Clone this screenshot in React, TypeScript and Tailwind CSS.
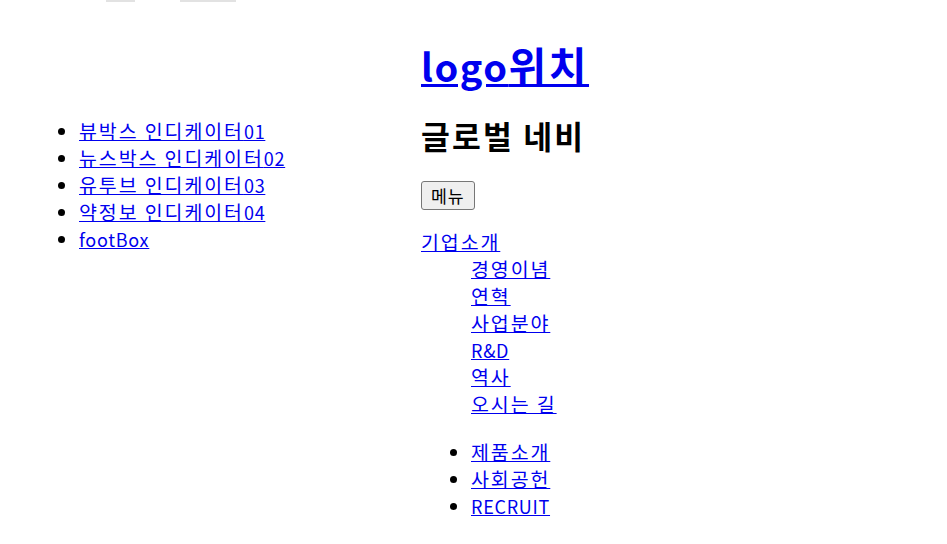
import React from 'react';

const leftItems = ['뷰박스 인디케이터01', '뉴스박스 인디케이터02', '유투브 인디케이터03', '약정보 인디케이터04', 'footBox'];
const subMenu = ['경영이념', '연혁', '사업분야', 'R&D', '역사', '오시는 길'];
const mainMenu = ['제품소개', '사회공헌', 'RECRUIT'];

const linkCls = 'text-[#0000ee] underline';

// Hangul in the original face is a touch bigger and wider than the CJK fallback here
const Txt: React.FC<{ t: string; k?: string }> = ({ t, k = 'tracking-[0.1em]' }) => (
  <>
    {t
      .split(/([\uAC00-\uD7A3 ]+)/)
      .filter(Boolean)
      .map((s, i) =>
        /[\uAC00-\uD7A3]/.test(s) ? (
          <span key={i} className={`text-[1.08em] leading-none ${k}`}>{s}</span>
        ) : (
          <span key={i} className="tracking-[0.04em]">{s}</span>
        )
      )}
  </>
);

const App: React.FC = () => {
  return (
    <div className="min-h-[544px] bg-white text-black font-['Noto_Sans_CJK_KR','Noto_Sans',sans-serif]">
      {/* scrolled-off remnants at the very top */}
      <div className="flex h-[3px] pl-[106px]">
        <div className="w-[29px] h-[2px] bg-[#e2e2e2]" />
        <div className="w-[56px] h-[2px] bg-[#e2e2e2] ml-[45px]" />
      </div>

      <h1 className="mt-[34px] pl-[421px] text-[38px] leading-[57px] font-bold">
        <a href="#" className={linkCls}><Txt t="logo위치" k="tracking-[0.06em]" /></a>
      </h1>

      <div className="flex mt-[24px]">
        <div className="w-[421px] shrink-0">
          <ul className="list-disc pl-[79px] text-[18px] leading-[27px]">
            {leftItems.map((t) => (
              <li key={t}>
                <a href="#" className={linkCls}><Txt t={t} /></a>
              </li>
            ))}
          </ul>
        </div>

        <div className="flex-1">
          <h2 className="text-[29px] leading-[36px] font-bold">
            <Txt t="글로벌 네비" k="tracking-[0.07em]" />
          </h2>
          <button className="mt-[27px] h-[29px] px-[9px] text-[16px] leading-none text-black bg-[#efefef] border border-[#767676] rounded-[3px]">
            <Txt t="메뉴" k="tracking-[0.05em]" />
          </button>

          <div className="mt-[19px] text-[18px] leading-[27px]">
            <a href="#" className={linkCls}><Txt t="기업소개" /></a>
            <ul className="pl-[50px]">
              {subMenu.map((t) => (
                <li key={t}>
                  <a href="#" className={linkCls}><Txt t={t} /></a>
                </li>
              ))}
            </ul>
            <ul className="list-disc pl-[50px] mt-[21px]">
              {mainMenu.map((t) => (
                <li key={t}>
                  <a href="#" className={linkCls}><Txt t={t} /></a>
                </li>
              ))}
            </ul>
          </div>
        </div>
      </div>
    </div>
  );
};

export default App;
